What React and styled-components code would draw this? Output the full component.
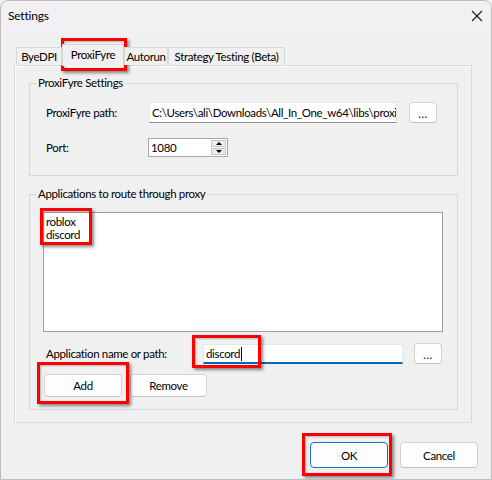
import React from "react";
import styled, { createGlobalStyle, css } from "styled-components";

const GlobalStyle = createGlobalStyle`
  html, body { margin: 0; padding: 0; background: #f0f0f0; }
  * { box-sizing: border-box; }
`;

const Window = styled.div`
  position: relative;
  width: 492px;
  height: 480px;
  background: #f0f0f0;
  border: 1px solid #bdbdbd;
  border-radius: 8px 8px 0 0;
  overflow: hidden;
  font-family: Lato, "Noto Sans", sans-serif;
  font-size: 11.5px;
  letter-spacing: -0.35px;
  color: #000;
`;

const TitleBar = styled.div`
  height: 29px;
  display: flex;
  align-items: center;
  justify-content: space-between;
  padding: 0 8px 0 7px;
  background: #f3f0f3;
`;

const Title = styled.span`
  font-size: 12px;
  letter-spacing: -0.2px;
`;

const TabStrip = styled.div`
  position: relative;
  z-index: 1;
  display: flex;
  align-items: flex-end;
  height: 22px;
  margin: 14px 0 0 15px;
`;

const Tab = styled.div`
  width: ${(p) => p.$w}px;
  height: 18px;
  margin-bottom: 1px;
  border: 1px solid #d9d9d9;
  border-bottom: none;
  display: flex;
  align-items: center;
  justify-content: center;
  white-space: nowrap;
  background: #f0f0f0;
  ${(p) =>
    p.$active &&
    css`
      height: 22px;
      margin-bottom: 0;
      align-items: flex-start;
      padding-top: 3px;
      border-color: #d0d0d0;
    `}
`;

const Panel = styled.div`
  width: 458px;
  height: 358px;
  margin: -1px 0 0 13px;
  border: 1px solid #d9d9d9;
  box-shadow: inset 1px 1px 0 #fbfbfb;
  padding: 9px 13px 0 14px;
`;

const Group = styled.fieldset`
  margin: ${(p) => p.$top}px 0 0 0;
  height: ${(p) => p.$h}px;
  padding: 0 13px 0 13px;
  border: 1px solid #d7d7d7;
  min-width: 0;
`;

const Legend = styled.legend`
  margin-left: -7px;
  padding: 0 2px;
  line-height: 16px;
`;

const Row = styled.div`
  display: flex;
  align-items: center;
  margin-top: ${(p) => p.$top}px;
`;

const Label = styled.span`
  width: ${(p) => p.$w}px;
  padding-left: ${(p) => p.$pad || 0}px;
  flex-shrink: 0;
  white-space: nowrap;
`;

const TextField = styled.div`
  width: ${(p) => p.$w}px;
  height: ${(p) => p.$h}px;
  background: #fff;
  border: 1px solid #e6e6e6;
  border-bottom-color: #8c8c8c;
  padding: 0 2px;
  display: flex;
  align-items: center;
  white-space: nowrap;
  overflow: hidden;
  ${(p) =>
    p.$focused &&
    css`
      border-bottom: 2px solid #0067c0;
      padding-top: 1px;
    `}
`;

const Caret = styled.span`
  display: inline-block;
  width: 1px;
  height: 14px;
  margin-left: 1px;
  background: #000;
`;

const Button = styled.button`
  width: ${(p) => p.$w}px;
  height: ${(p) => p.$h}px;
  margin-left: ${(p) => p.$left || 0}px;
  padding: 0;
  flex-shrink: 0;
  font: inherit;
  letter-spacing: inherit;
  color: #000;
  background: #fdfdfd;
  border: 1px solid #d3d3d3;
  border-bottom-color: #c2c2c2;
  border-radius: 4px;
  ${(p) =>
    p.$primary &&
    css`
      border: 1px solid #1a6fc1;
      box-shadow: inset 0 0 0 1px #fff;
    `}
`;

const Dots = styled.span`
  font-size: 11px;
  letter-spacing: 0.5px;
  position: relative;
  top: 1px;
`;

const SpinBox = styled.div`
  width: 80px;
  height: 19px;
  display: flex;
  background: #fff;
  border: 1px solid #a8a8a8;
`;

const SpinValue = styled.div`
  flex: 1;
  display: flex;
  align-items: center;
  padding-left: 2px;
`;

const SpinButtons = styled.div`
  width: 16px;
  display: flex;
  flex-direction: column;
  padding: 1px 1px 1px 0;
  gap: 1px;
`;

const SpinButton = styled.div`
  flex: 1;
  background: #ececec;
  border: 1px solid #c8c8c8;
  display: flex;
  align-items: center;
  justify-content: center;
`;

const Triangle = styled.span`
  width: 0;
  height: 0;
  border-left: 3px solid transparent;
  border-right: 3px solid transparent;
  ${(p) =>
    p.$up
      ? css`border-bottom: 3px solid #000;`
      : css`border-top: 3px solid #000;`}
`;

const ListBox = styled.div`
  width: 400px;
  height: 120px;
  margin-top: 10px;
  background: #fff;
  border: 1px solid #a0a0a0;
  padding: 2px 2px;
  line-height: 13px;
`;

const ButtonRow = styled.div`
  display: flex;
  gap: 8px;
  margin: 10px 0 0 1px;
`;

const Footer = styled.div`
  display: flex;
  justify-content: flex-end;
  gap: 12px;
  padding-right: 13px;
  margin-top: 19px;
`;

const Highlight = styled.div`
  position: absolute;
  left: ${(p) => p.$x}px;
  top: ${(p) => p.$y}px;
  width: ${(p) => p.$w}px;
  height: ${(p) => p.$h}px;
  border: 3px solid #ff0000;
  box-shadow: 2px 2px 3px rgba(0, 0, 0, 0.45), inset 1px 1px 2px rgba(0, 0, 0, 0.25);
  pointer-events: none;
`;

const tabs = [
  { label: "ByeDPI", w: 46 },
  { label: "ProxiFyre", w: 62, active: true },
  { label: "Autorun", w: 44 },
  { label: "Strategy Testing (Beta)", w: 117 },
];

const highlights = [
  { x: 60, y: 37, w: 66, h: 33 },
  { x: 39, y: 207, w: 52, h: 37 },
  { x: 191, y: 334, w: 69, h: 33 },
  { x: 36, y: 361, w: 92, h: 42 },
  { x: 301, y: 432, w: 90, h: 43 },
];

const CloseIcon = () => (
  <svg width="12" height="12" viewBox="0 0 12 12">
    <path d="M1 1 L11 11 M11 1 L1 11" stroke="#1a1a1a" strokeWidth="1.1" fill="none" />
  </svg>
);

export default function App() {
  return (
    <>
      <GlobalStyle />
      <Window>
        <TitleBar>
          <Title>Settings</Title>
          <CloseIcon />
        </TitleBar>

        <TabStrip>
          {tabs.map((t) => (
            <Tab key={t.label} $w={t.w} $active={t.active}>
              {t.label}
            </Tab>
          ))}
        </TabStrip>

        <Panel>
          <Group $top={0} $h={101}>
            <Legend>ProxiFyre Settings</Legend>
            <Row $top={11}>
              <Label $w={106} $pad={3}>ProxiFyre path:</Label>
              <TextField $w={248} $h={21}>
                C:\Users\ali\Downloads\All_In_One_w64\libs\proxi
              </TextField>
              <Button $w={28} $h={21} $left={12}>
                <Dots>...</Dots>
              </Button>
            </Row>
            <Row $top={15}>
              <Label $w={105} $pad={3}>Port:</Label>
              <SpinBox>
                <SpinValue>1080</SpinValue>
                <SpinButtons>
                  <SpinButton>
                    <Triangle $up />
                  </SpinButton>
                  <SpinButton>
                    <Triangle />
                  </SpinButton>
                </SpinButtons>
              </SpinBox>
            </Row>
          </Group>

          <Group $top={10} $h={224}>
            <Legend>Applications to route through proxy</Legend>
            <ListBox>
              <div>roblox</div>
              <div>discord</div>
            </ListBox>
            <Row $top={11}>
              <Label $w={160} $pad={3}>Application name or path:</Label>
              <TextField $w={200} $h={20} $focused>
                discord
                <Caret />
              </TextField>
              <Button $w={28} $h={21} $left={11}>
                <Dots>...</Dots>
              </Button>
            </Row>
            <ButtonRow>
              <Button $w={78} $h={23}>Add</Button>
              <Button $w={77} $h={23}>Remove</Button>
            </ButtonRow>
          </Group>
        </Panel>

        <Footer>
          <Button $w={78} $h={26} $primary>OK</Button>
          <Button $w={78} $h={26}>Cancel</Button>
        </Footer>

        {highlights.map((h, i) => (
          <Highlight key={i} $x={h.x} $y={h.y} $w={h.w} $h={h.h} />
        ))}
      </Window>
    </>
  );
}
